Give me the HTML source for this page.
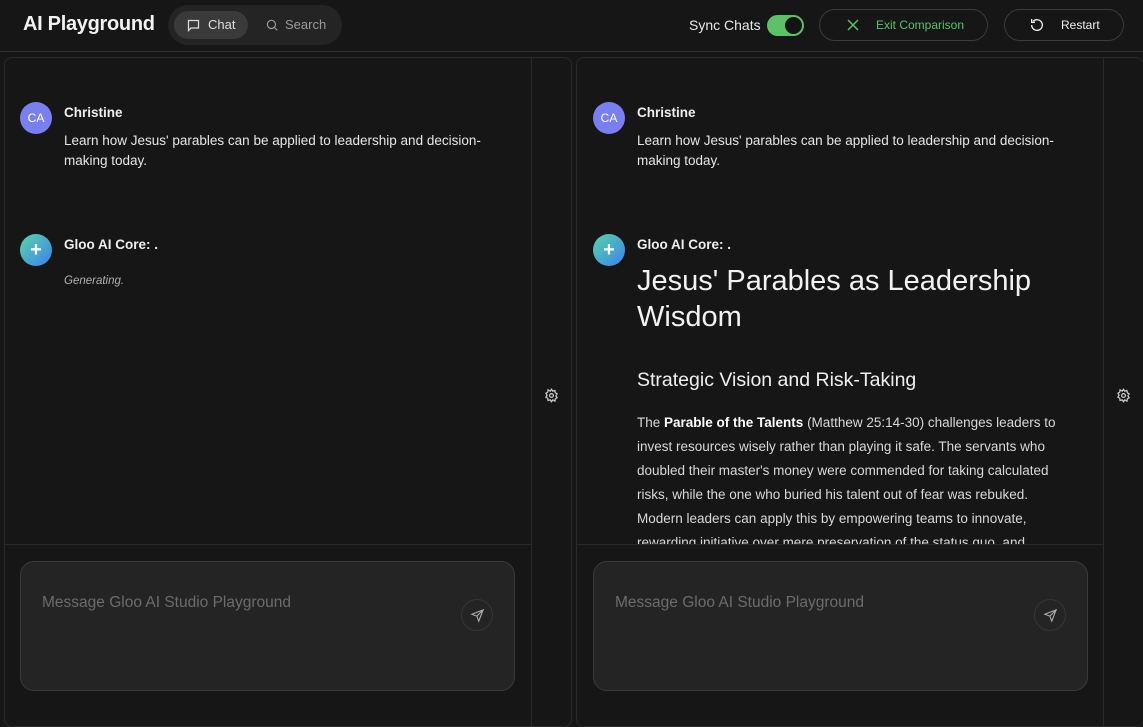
<!DOCTYPE html>
<html><head><meta charset="utf-8"><style>
*{box-sizing:border-box;margin:0;padding:0}
body{width:1143px;height:722px;background:#161616;font-family:"Liberation Sans",sans-serif;color:#e8e8e8;overflow:hidden;position:relative}
.hdr{position:absolute;left:0;top:0;width:1143px;height:52px;border-bottom:1px solid #333}
.title{position:absolute;left:23px;top:13px;font-size:20px;font-weight:bold;color:#f2f2f2;letter-spacing:-0.3px}
.seg{position:absolute;left:168px;top:5px;width:174px;height:40px;border-radius:20px;background:#242424}
.seg .chat{position:absolute;left:6px;top:6px;width:74px;height:28px;border-radius:14px;background:#3a3a3a;color:#ddd;font-size:13px;line-height:28px;padding-left:34px}
.seg .srch{position:absolute;left:95px;top:6px;height:28px;color:#9a9a9a;font-size:13px;line-height:28px;padding-left:22px}
.sync{position:absolute;left:689px;top:17px;font-size:14px;color:#e8e8e8}
.tog{position:absolute;left:767px;top:15px;width:37px;height:21px;border-radius:11px;background:#5cc26a}
.tog::after{content:"";position:absolute;right:2px;top:2px;width:17px;height:17px;border-radius:50%;background:#141414}
.btn{position:absolute;top:9px;height:32px;border:1px solid #3c3c3c;border-radius:16px;font-size:12px;line-height:30px}
.panel{position:absolute;top:57px;height:670px;border:1px solid #2a2a2a;border-radius:8px}
.side{position:absolute;top:0;bottom:0;width:40px;right:0;border-left:1px solid #2a2a2a}
.divl{position:absolute;left:0;top:486px;height:1px;background:#2a2a2a}
.av{position:absolute;width:32px;height:32px;border-radius:50%;font-size:12px;color:#fff;text-align:center;line-height:32px}
.ca{background:#7a7ff0}
.gl{background:linear-gradient(135deg,#5ad3a8,#3b82f0)}
.name{position:absolute;font-size:13.5px;font-weight:bold;color:#eee}
.msg{position:absolute;font-size:13.5px;line-height:20px;color:#e6e6e6;width:440px}
.inp{position:absolute;top:503px;width:495px;height:130px;border:1px solid #3a3a3a;border-radius:14px;background:#242424}
.ph{position:absolute;left:21px;top:32px;font-size:15.5px;color:#6c6c6c}
.send{position:absolute;right:21px;top:37px;width:32px;height:32px;border-radius:50%;border:1px solid #363636}
.gear{position:absolute;right:12px;top:330px}
</style></head><body>
<div class="hdr">
<div class="title">AI Playground</div>
<div class="seg">
 <div class="chat"><svg style="position:absolute;left:12px;top:7px" width="15" height="15" viewBox="0 0 24 24" fill="none" stroke="#ddd" stroke-width="2"><path d="M4 4h16v12H8l-4 4z"/></svg>Chat</div>
 <div class="srch"><svg style="position:absolute;left:2px;top:7px" width="14" height="14" viewBox="0 0 24 24" fill="none" stroke="#9a9a9a" stroke-width="2"><circle cx="11" cy="11" r="7"/><path d="M16 16l5 5"/></svg>Search</div>
</div>
<div class="sync">Sync Chats</div>
<div class="tog"></div>
<div class="btn" style="left:819px;width:169px;color:#5cc26a"><svg style="position:absolute;left:27px;top:9px" width="12" height="12" viewBox="0 0 12 12" stroke="#5cc26a" stroke-width="1.5"><path d="M1 1l10 10M11 1L1 11"/></svg><span style="position:absolute;left:56px">Exit Comparison</span></div>
<div class="btn" style="left:1004px;width:120px;color:#eee"><svg style="position:absolute;left:24px;top:7px" width="16" height="16" viewBox="0 0 24 24" fill="none" stroke="#eee" stroke-width="2"><path d="M4 12a8 8 0 1 0 2.5-5.8"/><path d="M4 3v5h5"/></svg><span style="position:absolute;left:56px">Restart</span></div>
</div>

<div class="panel" style="left:4px;width:568px">
 <div class="side"><svg class="gear" width="15" height="15" viewBox="0 0 24 24" fill="none" stroke="#ccc" stroke-width="2"><circle cx="12" cy="12" r="3"/><path d="M12 2l2 3 3.5-1 .5 3.5 3 2-2 3 2 3-3 2-.5 3.5L14 19l-2 3-2-3-3.5 1-.5-3.5-3-2 2-3-2-3 3-2 .5-3.5L10 5z"/></svg></div>
 <div class="divl" style="width:527px"></div>
 <div class="av ca" style="left:15px;top:44px">CA</div>
 <div class="name" style="left:59px;top:47px">Christine</div>
 <div class="msg" style="left:59px;top:73px">Learn how Jesus' parables can be applied to leadership and decision-making today.</div>
 <div class="av gl" style="left:15px;top:176px;font-size:20px;font-weight:bold">+</div>
 <div class="name" style="left:59px;top:179px">Gloo AI Core: .</div>
 <div style="position:absolute;left:59px;top:217px;font-size:11.5px;font-style:italic;color:#b0b0b0">Generating.</div>
 <div class="inp" style="left:15px"><div class="ph">Message Gloo AI Studio Playground</div><div class="send"><svg style="position:absolute;left:8px;top:8px" width="15" height="15" viewBox="0 0 24 24" fill="none" stroke="#aaa" stroke-width="1.8"><path d="M21 3L3 10l8 3 3 8z M21 3L11 13"/></svg></div></div>
</div>

<div class="panel" style="left:576px;width:568px">
 <div class="side"><svg class="gear" width="15" height="15" viewBox="0 0 24 24" fill="none" stroke="#ccc" stroke-width="2"><circle cx="12" cy="12" r="3"/><path d="M12 2l2 3 3.5-1 .5 3.5 3 2-2 3 2 3-3 2-.5 3.5L14 19l-2 3-2-3-3.5 1-.5-3.5-3-2 2-3-2-3 3-2 .5-3.5L10 5z"/></svg></div>
 <div style="position:absolute;left:0;top:0;width:527px;height:486px;overflow:hidden">
 <div class="av ca" style="left:16px;top:44px">CA</div>
 <div class="name" style="left:60px;top:47px">Christine</div>
 <div class="msg" style="left:60px;top:73px">Learn how Jesus' parables can be applied to leadership and decision-making today.</div>
 <div class="av gl" style="left:16px;top:176px;font-size:20px;font-weight:bold">+</div>
 <div class="name" style="left:60px;top:179px">Gloo AI Core: .</div>
 <div style="position:absolute;left:60px;top:205px;font-size:29px;line-height:36px;color:#f2f2f2;width:450px">Jesus' Parables as Leadership Wisdom</div>
 <div style="position:absolute;left:60px;top:311px;font-size:19.5px;color:#f0f0f0">Strategic Vision and Risk-Taking</div>
 <div style="position:absolute;left:60px;top:353px;font-size:13.5px;line-height:24px;color:#d8d8d8;width:440px">The <b style="color:#fff">Parable of the Talents</b> (Matthew 25:14-30) challenges leaders to invest resources wisely rather than playing it safe. The servants who doubled their master's money were commended for taking calculated risks, while the one who buried his talent out of fear was rebuked. Modern leaders can apply this by empowering teams to innovate, rewarding initiative over mere preservation of the status quo, and</div>
 </div>
 <div class="divl" style="width:527px"></div>
 <div class="inp" style="left:16px"><div class="ph">Message Gloo AI Studio Playground</div><div class="send"><svg style="position:absolute;left:8px;top:8px" width="15" height="15" viewBox="0 0 24 24" fill="none" stroke="#aaa" stroke-width="1.8"><path d="M21 3L3 10l8 3 3 8z M21 3L11 13"/></svg></div></div>
</div>
</body></html>
